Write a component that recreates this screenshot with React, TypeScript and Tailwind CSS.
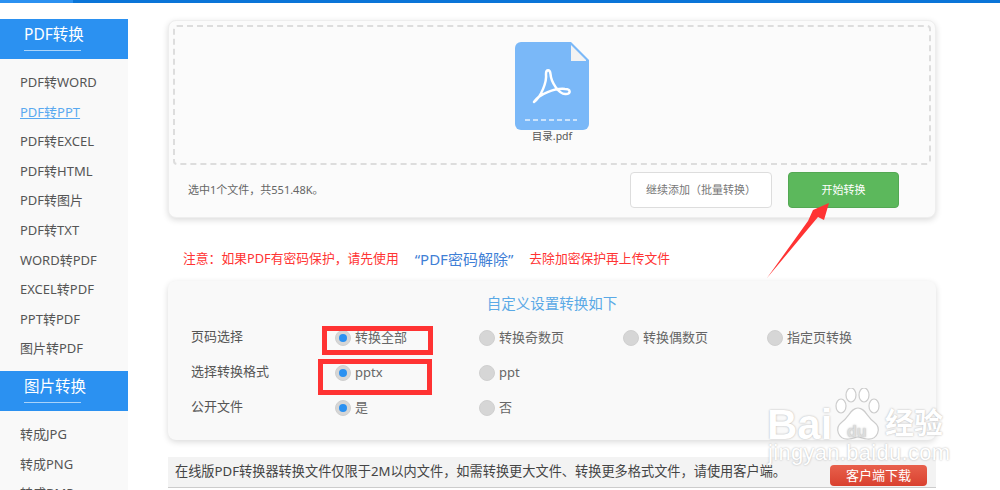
import React from 'react';

const pdfItems = ['PDF转WORD', 'PDF转PPT', 'PDF转EXCEL', 'PDF转HTML', 'PDF转图片', 'PDF转TXT', 'WORD转PDF', 'EXCEL转PDF', 'PPT转PDF', '图片转PDF'];
const imgItems = ['转成JPG', '转成PNG', '转成BMP'];

const rows = [
  { label: '页码选择', options: ['转换全部', '转换奇数页', '转换偶数页', '指定页转换'] },
  { label: '选择转换格式', options: ['pptx', 'ppt'] },
  { label: '公开文件', options: ['是', '否'] },
];

const SideHead = ({ title }: { title: string }) => (
  <div className="h-10 bg-[#2b91f1] pl-6">
    <div className="w-[57px] h-[32px] border-b border-[#a9d3fa] text-[15.5px] leading-[31px] text-white whitespace-nowrap">{title}</div>
  </div>
);

const Radio = ({ on, label }: { on: boolean; label: string }) => (
  <div className="w-[144px] flex items-center gap-[4px]">
    <span className="w-4 h-4 rounded-full bg-[#d6d6d6] border border-[#d0d0d0] flex items-center justify-center">
      {on && <span className="w-2 h-2 rounded-full bg-[#2b91f1]" />}
    </span>
    <span className="text-[13px] text-[#666]">{label}</span>
  </div>
);

const PdfIcon = () => (
  <svg width="74" height="88" viewBox="0 0 74 88" className="block">
    <path d="M6 0H56L74 18V82a6 6 0 0 1-6 6H6a6 6 0 0 1-6-6V6a6 6 0 0 1 6-6Z" fill="#7ab8f8" />
    <path d="M56 3L71 18V19H56Z" fill="#f2f2f2" />
    <path d="M19 60C26 55 32 40 31 32C31 27 35 27 35.500 32C36 40 44 53 51 52C56 52 56 47 50 47C40 46 24 52 19 60Z" fill="none" stroke="#fff" strokeWidth="2.500" strokeLinejoin="round" />
    <path d="M10 78H62" stroke="#e6f1fd" strokeWidth="1.500" strokeDasharray="5 3" />
  </svg>
);

const Watermark = () => (
  <div className="absolute left-[762px] top-[385px] w-[200px] h-[90px] pointer-events-none text-white [text-shadow:0_0_2px_#aaa]">
    <svg width="50" height="58" viewBox="0 0 50 58" className="absolute left-[71px] top-[3px]" fill="#fff" stroke="#ccc" strokeWidth="1.200">
      <ellipse cx="8" cy="18" rx="5" ry="7" />
      <ellipse cx="18" cy="7" rx="5" ry="7" />
      <ellipse cx="31" cy="7" rx="5" ry="7" />
      <ellipse cx="41" cy="18" rx="5" ry="7" />
      <path d="M25 20c7 0 9 9 16 14 8 6 4 18-7 17-4 0-6-2-9-2s-5 2-9 2c-11 1-15-11-7-17 7-5 9-14 16-14Z" />
    </svg>
    <div className="absolute left-[5px] top-[17px] font-['Liberation_Sans',sans-serif] font-bold text-[42px] leading-[46px]">Bai</div>
    <div className="absolute left-[85px] top-[37px] font-['Liberation_Sans',sans-serif] font-bold text-[16px] leading-[20px] text-[#ddd]">du</div>
    <div className="absolute left-[123px] top-[20px] font-bold text-[29px] leading-[36px] whitespace-nowrap">经验</div>
    <div className="absolute left-[6px] top-[56px] font-['Liberation_Sans',sans-serif] text-[22px] leading-[24px] tracking-[0.3px] whitespace-nowrap">jingyan.baidu.com</div>
  </div>
);

export default function App() {
  return (
    <div className="relative w-[1000px] h-[490px] overflow-hidden bg-white font-['Noto_Sans','Noto_Sans_CJK_SC',sans-serif]">
      <div className="flex h-[3px]">
        <div className="w-[73px] bg-[#2b91f1]" />
        <div className="flex-1 bg-[#0a75d8]" />
      </div>

      <div className="flex items-start">
        {/* 左侧菜单 */}
        <aside className="w-[128px] mt-4 bg-[#f9f9f9]">
          <SideHead title="PDF转换" />
          <ul className="pt-[9px] pb-[7px] pl-5">
            {pdfItems.map((t) => (
              <li key={t} className={`h-[29.6px] leading-[29.6px] text-[13px] whitespace-nowrap ${t === 'PDF转PPT' ? 'text-[#5aa9f0] underline' : 'text-[#555]'}`}>{t}</li>
            ))}
          </ul>
          <SideHead title="图片转换" />
          <ul className="pt-[9px] pl-5">
            {imgItems.map((t) => (
              <li key={t} className="h-[29.6px] leading-[29.6px] text-[13px] text-[#555] whitespace-nowrap">{t}</li>
            ))}
          </ul>
        </aside>

        <main className="ml-[40px] w-[768px] mt-[17px]">
          {/* 上传区域 */}
          <section className="h-[198px] rounded-lg bg-[#fbfbfb] border border-[#eee] shadow-[0_2px_6px_rgba(0,0,0,0.15)] p-[4px]">
            <div className="h-[140px] border-2 border-dashed border-[#ddd] rounded flex flex-col items-center pt-[15px]">
              <PdfIcon />
              <div className="text-[10.5px] leading-[14px] -mt-[1px] text-[#555]">目录.pdf</div>
            </div>
            <div className="flex items-center pl-[15px] pt-[7px]">
              <span className="text-[11px] text-[#666]">选中1个文件，共551.48K。</span>
              <button className="ml-auto w-[142px] h-9 rounded bg-white border border-[#ddd] text-[11px] text-[#777]">继续添加（批量转换）</button>
              <button className="ml-[16px] mr-[32px] w-[111px] h-9 rounded bg-[#5cb85c] border border-[#53a853] text-[11px] text-white">开始转换</button>
            </div>
          </section>

          <p className="h-[63px] pl-[15px] pt-[19px] flex items-center text-[12.8px] text-[#f33] whitespace-nowrap">
            注意：如果PDF有密码保护，请先使用
            <span className="ml-[16px] mr-[16px] text-[15px] text-[#3f7fd6]">“PDF密码解除”</span>
            去除加密保护再上传文件
          </p>

          {/* 转换设置 */}
          <section className="h-[159px] rounded-lg bg-[#f9f9f9] shadow-[0_2px_6px_rgba(0,0,0,0.15)] pt-[12px] px-[23px]">
            <h3 className="text-center text-[14.5px] leading-5 text-[#5aa9e6]">自定义设置转换如下</h3>
            <div className="mt-[13px] flex flex-col gap-[12px]">
              {rows.map((r) => (
                <div key={r.label} className="flex items-center h-[23px]">
                  <span className="w-[144px] text-[13px] text-[#555] -mt-[2px]">{r.label}</span>
                  {r.options.map((o, i) => (
                    <Radio key={o} label={o} on={i === 0} />
                  ))}
                </div>
              ))}
            </div>
          </section>

          <div className="mt-[17px] h-[31px] bg-[#f3f3f3] border-b border-[#ccc] flex items-center pl-[7px] text-[13.2px] text-[#444] whitespace-nowrap">
            在线版PDF转换器转换文件仅限于2M以内文件，如需转换更大文件、转换更多格式文件，请使用客户端。
            <button className="absolute left-[830px] top-[465px] w-[97px] h-[21px] rounded-sm bg-gradient-to-b from-[#e8604c] to-[#d9402e] text-[13px] leading-[21px] text-white">客户端下载</button>
          </div>
        </main>
      </div>

      {/* 标注 */}
      <div className="absolute left-[322px] top-[326px] w-[111px] h-[29px] border-[5px] border-[#f33]" />
      <div className="absolute left-[318px] top-[359px] w-[114px] h-[36px] border-[5px] border-[#f33]" />
      <svg className="absolute left-[760px] top-[195px]" width="80" height="90" viewBox="0 0 80 90">
        <path d="M7 83L48 26L53 15L69 8L64 25L58 22Z" fill="#f33" />
      </svg>

      <Watermark />
    </div>
  );
}
